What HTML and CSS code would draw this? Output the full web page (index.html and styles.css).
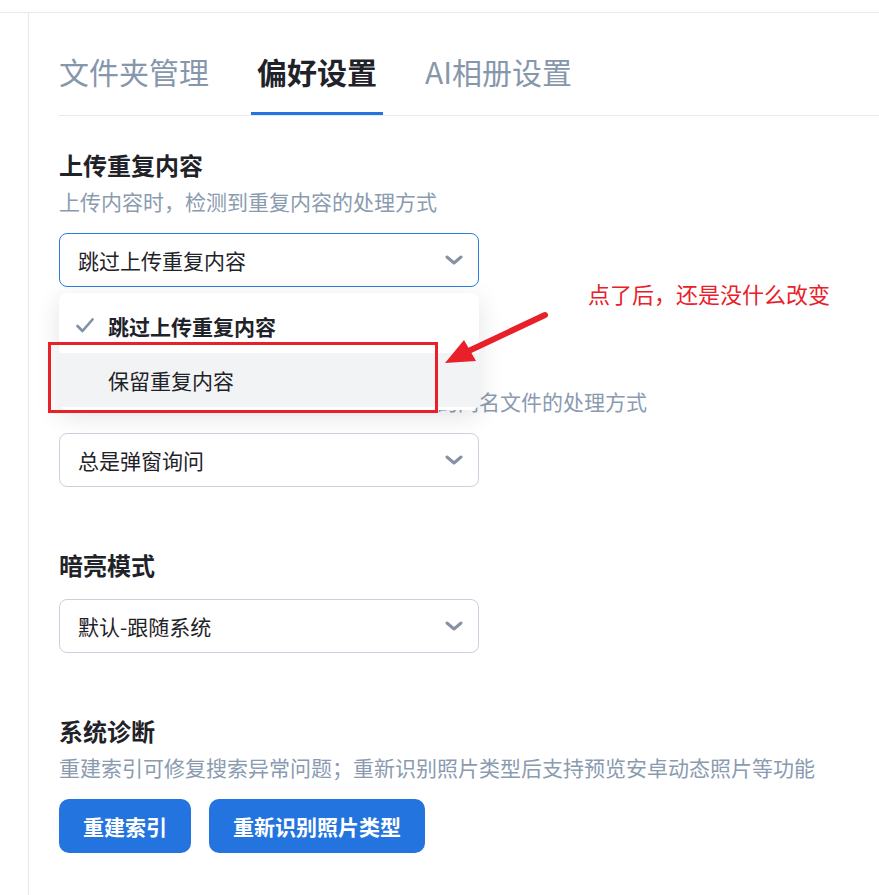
FILE: index.html
```html
<!DOCTYPE html>
<html lang="zh-CN">
<head>
<meta charset="utf-8">
<title>偏好设置</title>
<link rel="stylesheet" href="styles.css">
</head>
<body>
<div class="topbar"></div>
<div class="layout">
  <aside class="sidebar"></aside>
  <main class="content">
    <nav class="tabs">
      <div class="tab first">文件夹管理</div>
      <div class="tab active">偏好设置</div>
      <div class="tab">AI相册设置</div>
    </nav>

    <section class="section first-section">
      <h2 class="heading">上传重复内容</h2>
      <p class="desc">上传内容时，检测到重复内容的处理方式</p>
      <div class="select-wrap">
        <div class="select focused">
          <span>跳过上传重复内容</span>
          <svg class="chev" width="18" height="10" viewBox="0 0 18 10"><path d="M2 2 L9 8 L16 2" fill="none" stroke="#8592a6" stroke-width="3" stroke-linecap="round" stroke-linejoin="round"/></svg>
        </div>
        <div class="menu">
          <div class="menu-item selected">
            <svg class="check" width="18" height="15" viewBox="0 0 18 15"><path d="M1.5 8 L6.5 13 L16.5 1.5" fill="none" stroke="#8190a5" stroke-width="2.6" stroke-linecap="round" stroke-linejoin="round"/></svg>
            跳过上传重复内容
          </div>
          <div class="menu-item hover">保留重复内容</div>
        </div>
      </div>
    </section>

    <section class="section">
      <h2 class="heading">上传同名文件</h2>
      <p class="desc">上传内容时，检测到目标文件夹中已存在的同名文件的处理方式</p>
      <div class="select">
        <span>总是弹窗询问</span>
        <svg class="chev" width="18" height="10" viewBox="0 0 18 10"><path d="M2 2 L9 8 L16 2" fill="none" stroke="#8592a6" stroke-width="3" stroke-linecap="round" stroke-linejoin="round"/></svg>
      </div>
    </section>

    <section class="section">
      <h2 class="heading">暗亮模式</h2>
      <div class="select">
        <span>默认-跟随系统</span>
        <svg class="chev" width="18" height="10" viewBox="0 0 18 10"><path d="M2 2 L9 8 L16 2" fill="none" stroke="#8592a6" stroke-width="3" stroke-linecap="round" stroke-linejoin="round"/></svg>
      </div>
    </section>

    <section class="section">
      <h2 class="heading">系统诊断</h2>
      <p class="desc">重建索引可修复搜索异常问题；重新识别照片类型后支持预览安卓动态照片等功能</p>
      <div class="buttons">
        <button class="btn">重建索引</button>
        <button class="btn">重新识别照片类型</button>
      </div>
    </section>
  </main>
</div>

<div class="note-box"></div>
<div class="note-text">点了后，还是没什么改变</div>
<svg class="note-arrow" width="879" height="895" viewBox="0 0 879 895">
  <path d="M545 315 L458 356" stroke="#e8202a" stroke-width="6" stroke-linecap="round" fill="none"/>
  <path d="M445 363 L464 340 L476 361 Z" fill="#e8202a"/>
</svg>
</body>
</html>
```

FILE: styles.css
```css
* { box-sizing: border-box; }

html, body {
  margin: 0;
  padding: 0;
  background: #ffffff;
}

body {
  font-family: "Noto Sans CJK SC", "Noto Sans", sans-serif;
  color: #1f2329;
  height: 895px;
  overflow: hidden;
}

.topbar {
  height: 13px;
  border-bottom: 1px solid #e6e9ee;
}

.layout {
  display: flex;
  height: 882px;
}

.sidebar {
  width: 29px;
  border-right: 1px solid #e6e9ee;
  flex: none;
}

.content {
  flex: 1;
  padding-left: 30px;
}

.tabs {
  display: flex;
  gap: 36px;
  margin-top: 38px;
  border-bottom: 1px solid #e6e9ee;
}

.tab {
  font-size: 30px;
  line-height: 40px;
  padding: 0 6px 21px;
  border-bottom: 3px solid transparent;
  color: #8797ab;
  white-space: nowrap;
}

.tab.first { padding-left: 0; }

.tab.active {
  color: #1f2329;
  font-weight: 700;
  border-bottom-color: #2474e0;
}

.section {
  margin-top: 62px;
  width: 420px;
}

.section.first-section { margin-top: 33px; }

.heading {
  margin: 0;
  font-size: 24px;
  line-height: 32px;
  font-weight: 700;
  color: #1f2329;
}

.desc {
  margin: 6px 0 0;
  font-size: 21px;
  line-height: 28px;
  color: #8a9bb0;
  white-space: nowrap;
}

.select-wrap {
  position: relative;
  padding-top: 18px;
}

.select-wrap .select { margin-top: 0; }

.select {
  margin-top: 18px;
  height: 54px;
  border: 1px solid #c9d2de;
  border-radius: 8px;
  display: flex;
  align-items: center;
  justify-content: space-between;
  padding: 0 15px 0 18px;
  font-size: 21px;
  color: #1f2329;
  background: #fff;
}

.select.focused { border-color: #2b7de0; }

.chev { flex: none; }

.menu {
  position: absolute;
  left: 0;
  top: 78px;
  width: 420px;
  background: #fff;
  border-radius: 8px;
  padding: 6px 0 3px;
  box-shadow: 0 6px 24px rgba(30, 40, 60, 0.13);
  z-index: 5;
}

.menu-item {
  position: relative;
  height: 54px;
  display: flex;
  align-items: center;
  padding-left: 49px;
  font-size: 21px;
  color: #1f2329;
}

.menu-item.selected { font-weight: 700; }

.menu-item.hover { background: #f2f3f5; }

.check {
  position: absolute;
  left: 17px;
  top: 19px;
}

.buttons {
  margin-top: 18px;
  display: flex;
  gap: 18px;
}

.btn {
  height: 54px;
  padding: 0 24px;
  border: none;
  border-radius: 10px;
  background: #2474e0;
  color: #fff;
  font-family: inherit;
  font-size: 21px;
  font-weight: 700;
  white-space: nowrap;
}

.note-box {
  position: absolute;
  left: 48px;
  top: 342px;
  width: 390px;
  height: 71px;
  border: 3px solid #e8202a;
  z-index: 10;
}

.note-text {
  position: absolute;
  left: 588px;
  top: 278px;
  font-size: 22px;
  line-height: 30px;
  color: #e8202a;
  white-space: nowrap;
  z-index: 10;
}

.note-arrow {
  position: absolute;
  left: 0;
  top: 0;
  z-index: 10;
  pointer-events: none;
}
```
